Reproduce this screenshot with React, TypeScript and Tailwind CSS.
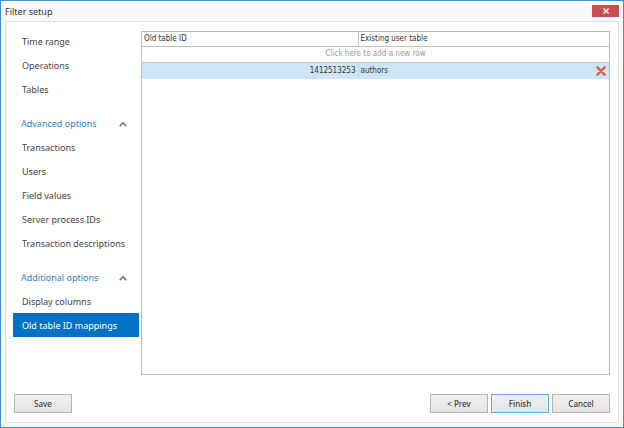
import { useState } from "react";

interface INavGroup {
  title?: string;
  items: string[];
}

const groups: INavGroup[] = [
  { items: ["Time range", "Operations", "Tables"] },
  {
    title: "Advanced options",
    items: ["Transactions", "Users", "Field values", "Server process IDs", "Transaction descriptions"],
  },
  { title: "Additional options", items: ["Display columns", "Old table ID mappings"] },
];

const Chevron: React.FC<{ open: boolean }> = ({ open }) => (
  <svg
    className={open ? "" : "rotate-180"}
    width="8"
    height="6"
    viewBox="0 0 8 6"
    fill="none"
    stroke="#777777"
    strokeWidth="1.6"
  >
    <path d="M0.8 5.2 4 1.6 7.2 5.2" />
  </svg>
);

const NavGroup: React.FC<{ group: INavGroup; selected: string; onSelect: (item: string) => void }> = ({
  group,
  selected,
  onSelect,
}) => {
  const [open, setOpen] = useState(true);

  return (
    <div>
      {group.title && (
        <button
          onClick={() => setOpen(!open)}
          aria-expanded={open}
          className="flex h-6 w-full items-center justify-between pt-0.5 pr-3 pl-2 text-[#2a82cf]"
        >
          {group.title}
          <Chevron open={open} />
        </button>
      )}
      {open &&
        group.items.map((item) => (
          <button
            key={item}
            onClick={() => onSelect(item)}
            className={
              item === selected
                ? "block h-6 w-full bg-[#0072c6] pt-0.5 pl-[9px] text-left whitespace-nowrap text-white"
                : "block h-6 w-full pt-0.5 pl-[9px] text-left whitespace-nowrap text-[#444444]"
            }
          >
            {item}
          </button>
        ))}
    </div>
  );
};

const FooterButton: React.FC<{ label: string; primary?: boolean }> = ({ label, primary }) => (
  <button
    className={
      primary
        ? "h-[19px] w-[58px] border border-[#5aaaf8] bg-linear-to-b from-[#f0f0f0] to-[#e5e5e5] text-[#3c3c3c]"
        : "h-[19px] w-[58px] border border-[#b4b4b4] bg-linear-to-b from-[#f0f0f0] to-[#e5e5e5] text-[#3c3c3c]"
    }
  >
    {label}
  </button>
);

const App = () => {
  const [selected, setSelected] = useState("Old table ID mappings");
  const [rows, setRows] = useState([{ id: "1412513253", table: "authors" }]);

  return (
    <div className="flex h-screen flex-col border border-[#3f91d3] bg-[#fafafa] px-1 pb-1 font-['Noto_Sans',sans-serif] text-[9px]">
      <header className="flex h-5 shrink-0 items-center justify-between text-[#333333]">
        <h1 className="pt-px">Filter setup</h1>
        <button aria-label="Close" className="flex h-3 w-[27px] items-center justify-center bg-[#c75050]">
          <svg width="6" height="6" viewBox="0 0 6 6" stroke="#fff" strokeWidth="1.4">
            <path d="M0.5 0.5 5.5 5.5M5.5 0.5 0.5 5.5" />
          </svg>
        </button>
      </header>

      <main className="flex min-h-0 flex-1 flex-col border border-[#dedede] bg-white px-[7px] pt-[7px] pb-[9px]">
        <div className="flex min-h-0 flex-1 gap-0.5 pr-px">
          <nav className="flex w-[126px] shrink-0 flex-col gap-2.5">
            {groups.map((group) => (
              <NavGroup key={group.items[0]} group={group} selected={selected} onSelect={setSelected} />
            ))}
          </nav>

          <div className="mt-0.5 min-w-0 flex-1 border border-[#bdbdbd] font-['DejaVu_Sans_Condensed','DejaVu_Sans',sans-serif] text-[8px] leading-3 text-[#333333]">
            <table className="w-full table-fixed border-collapse">
              <colgroup>
                <col className="w-[216px]" />
                <col />
                <col className="w-4" />
              </colgroup>
              <thead>
                <tr className="h-[14px] border-b border-[#c0c0c0]">
                  <th className="border-r border-[#c0c0c0] px-0.5 text-left font-normal">Old table ID</th>
                  <th colSpan={2} className="px-0.5 text-left font-normal">
                    Existing user table
                  </th>
                </tr>
              </thead>
              <tbody>
                <tr className="h-4 border-b border-[#c0c0c0]">
                  <td colSpan={3} className="text-center text-[#999999]">
                    Click here to add a new row
                  </td>
                </tr>
                {rows.map((row) => (
                  <tr key={row.id} className="h-[17px] bg-[#cde6f7]">
                    <td className="border-r border-[#c3dcec] px-0.5 text-right">{row.id}</td>
                    <td className="px-0.5">{row.table}</td>
                    <td>
                      <button
                        aria-label="Delete row"
                        onClick={() => setRows(rows.filter((r) => r.id !== row.id))}
                        className="mx-auto block"
                      >
                        <svg width="10" height="10" viewBox="0 0 10 10" stroke="#dc6446" strokeWidth="2.6" strokeLinecap="round">
                          <path d="M1.4 1.4 8.6 8.6M8.6 1.4 1.4 8.6" />
                        </svg>
                      </button>
                    </td>
                  </tr>
                ))}
              </tbody>
            </table>
          </div>
        </div>

        <footer className="mt-[19px] flex shrink-0 items-center justify-between px-px text-[8px] leading-none font-medium">
          <FooterButton label="Save" />
          <div className="flex gap-[3px]">
            <FooterButton label="< Prev" />
            <FooterButton label="Finish" primary />
            <FooterButton label="Cancel" />
          </div>
        </footer>
      </main>
    </div>
  );
};

export default App;
